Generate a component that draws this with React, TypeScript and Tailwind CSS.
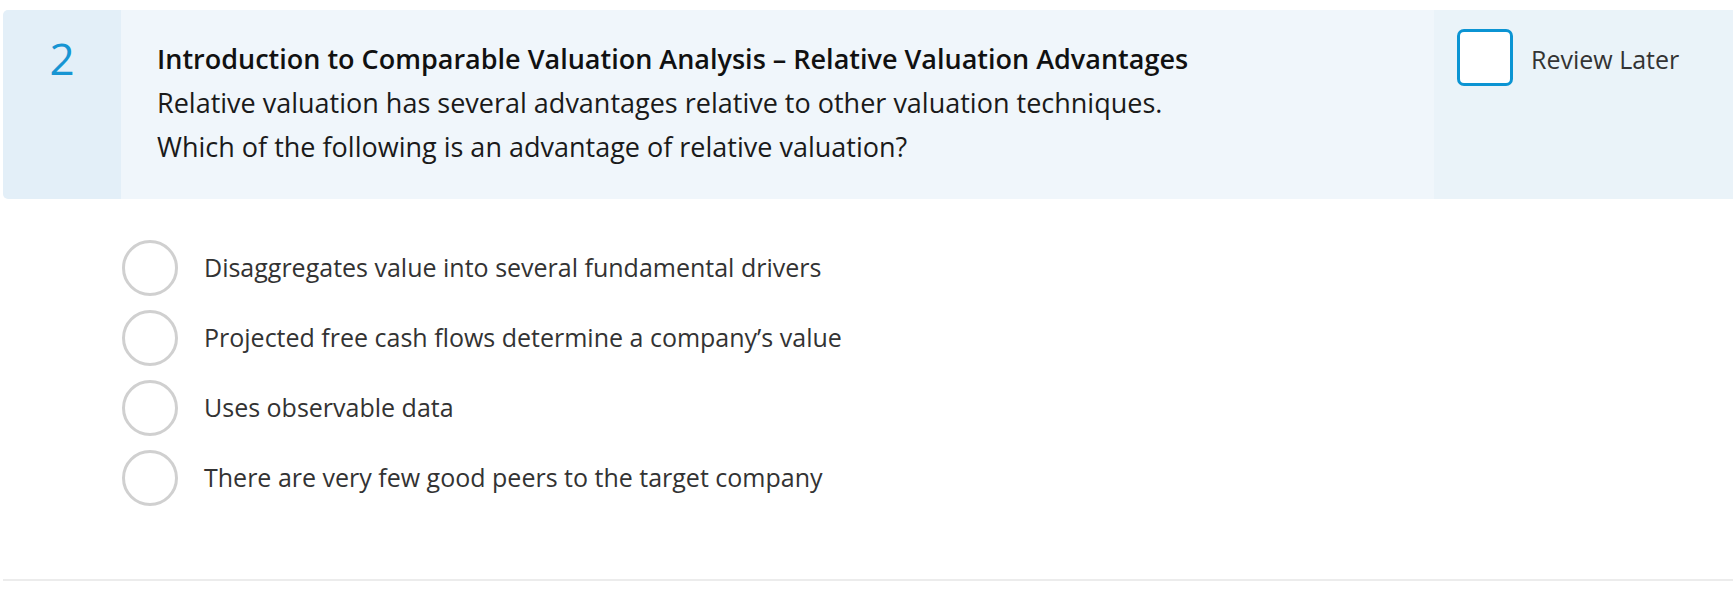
import React, { useState } from 'react';

const options = [
  'Disaggregates value into several fundamental drivers',
  'Projected free cash flows determine a company\u2019s value',
  'Uses observable data',
  'There are very few good peers to the target company',
];

export default function App() {
  const [selected, setSelected] = useState<number | null>(null);
  const [review, setReview] = useState(false);

  return (
    <div className="min-h-screen bg-white pl-[3px] pt-[10px] font-['Open_Sans',sans-serif]">
      {/* Question header */}
      <div className="flex h-[189px] overflow-hidden rounded-l-[5px]">
        <div className="w-[118px] shrink-0 bg-[#e3eff8] pt-[26px] text-center">
          <span className="text-[44px] font-medium leading-[44px] text-[#1795d3]">2</span>
        </div>
        <div className="flex-1 bg-[#f0f6fb] pl-[36px] pt-[27px] text-[27px] leading-[44px] text-[#1a1a1a]">
          <div className="font-semibold text-[#111]">
            Introduction to Comparable Valuation Analysis – Relative Valuation Advantages
          </div>
          <div>Relative valuation has several advantages relative to other valuation techniques.</div>
          <div>Which of the following is an advantage of relative valuation?</div>
        </div>
        <div className="w-[299px] shrink-0 bg-[#eaf3f9] pl-[23px] pt-[19px]">
          <label className="flex cursor-pointer items-center gap-[18px]">
            <button
              onClick={() => setReview(!review)}
              className="h-[57px] w-[56px] rounded-[7px] border-[3px] border-[#0b94d3] bg-white"
            >
              {review && <span className="text-[#0b94d3]">✓</span>}
            </button>
            <span className="pt-[4px] text-[25px] text-[#333]">Review Later</span>
          </label>
        </div>
      </div>

      {/* Answer options */}
      <div className="flex flex-col gap-[14px] pl-[119px] pt-[41px]">
        {options.map((opt, i) => (
          <div
            key={opt}
            className="flex h-[56px] cursor-pointer items-center gap-[26px]"
            onClick={() => setSelected(i)}
          >
            <div className="flex h-[56px] w-[56px] shrink-0 items-center justify-center rounded-full border-[3px] border-[#d0d0d0] bg-white">
              {selected === i && <div className="h-[28px] w-[28px] rounded-full bg-[#1795d3]" />}
            </div>
            <span className="text-[25px] text-[#333]">{opt}</span>
          </div>
        ))}
      </div>

      <div className="mt-[73px] h-[2px] bg-[#ececec]" />
    </div>
  );
}
